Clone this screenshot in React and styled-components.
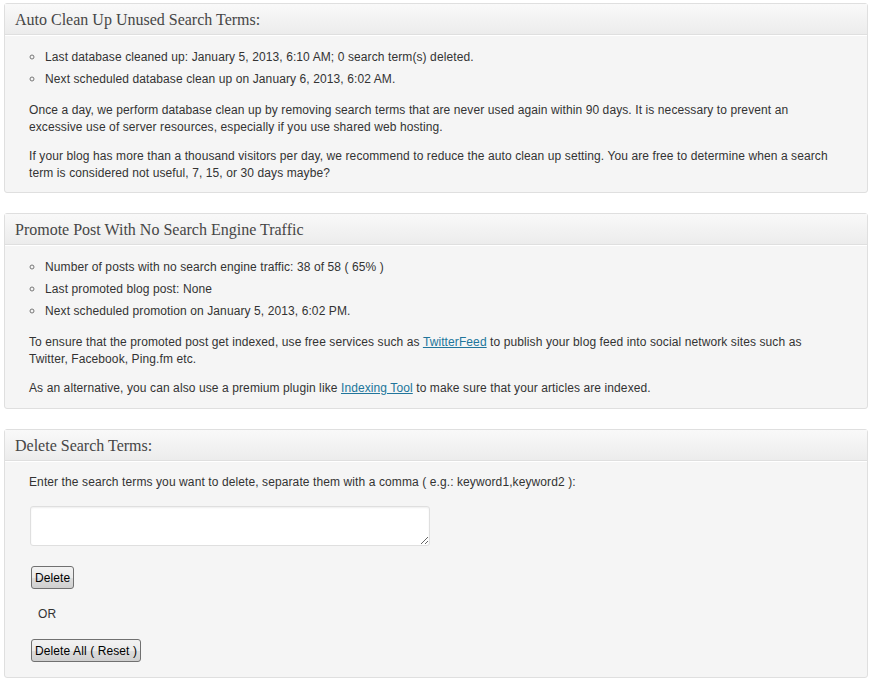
import React from 'react';
import styled, { createGlobalStyle } from 'styled-components';

const GlobalStyle = createGlobalStyle`
  html, body {
    margin: 0;
    padding: 0;
    background: #fff;
  }
  body {
    font-family: "Liberation Sans", Arial, sans-serif;
    font-size: 12px;
    letter-spacing: 0.1px;
    color: #333;
  }
`;

function App() {
  return (
    <Page>
      <GlobalStyle />
      <Postbox>
        <Handle>Auto Clean Up Unused Search Terms:</Handle>
        <Inside>
          <List>
            <li>Last database cleaned up: January 5, 2013, 6:10 AM; 0 search term(s) deleted.</li>
            <li>Next scheduled database clean up on January 6, 2013, 6:02 AM.</li>
          </List>
          <Para>
            Once a day, we perform database clean up by removing search terms that are never used again within 90 days. It is necessary to prevent an<br />
            excessive use of server resources, especially if you use shared web hosting.
          </Para>
          <Para>
            If your blog has more than a thousand visitors per day, we recommend to reduce the auto clean up setting. You are free to determine when a search<br />
            term is considered not useful, 7, 15, or 30 days maybe?
          </Para>
        </Inside>
      </Postbox>

      <Postbox>
        <Handle>Promote Post With No Search Engine Traffic</Handle>
        <Inside $bottom={11}>
          <List>
            <li>Number of posts with no search engine traffic: 38 of 58 ( 65% )</li>
            <li>Last promoted blog post: None</li>
            <li>Next scheduled promotion on January 5, 2013, 6:02 PM.</li>
          </List>
          <Para>
            To ensure that the promoted post get indexed, use free services such as <Link href="#">TwitterFeed</Link> to publish your blog feed into social network sites such as<br />
            Twitter, Facebook, Ping.fm etc.
          </Para>
          <Para>
            As an alternative, you can also use a premium plugin like <Link href="#">Indexing Tool</Link> to make sure that your articles are indexed.
          </Para>
        </Inside>
      </Postbox>

      <Postbox>
        <Handle>Delete Search Terms:</Handle>
        <Inside $top={13} $bottom={15}>
          <Para>Enter the search terms you want to delete, separate them with a comma ( e.g.: keyword1,keyword2 ):</Para>
          <TermsInput />
          <Button>Delete</Button>
          <OrText>OR</OrText>
          <Button>Delete All ( Reset )</Button>
        </Inside>
      </Postbox>
    </Page>
  );
}

const Page = styled.div`
  padding: 3px 3px 0 4px;
  display: flex;
  flex-direction: column;
  gap: 20px;
`;

const Postbox = styled.div`
  background: #f5f5f5;
  border: 1px solid #dfdfdf;
  border-radius: 3px;
  box-shadow: inset 0 1px 0 #fff;
`;

const Handle = styled.h3`
  margin: 0;
  height: 30px;
  line-height: 31px;
  padding: 0 10px;
  font-family: "Liberation Serif", Georgia, serif;
  font-size: 16px;
  font-weight: normal;
  letter-spacing: 0;
  color: #464646;
  background: linear-gradient(to bottom, #f9f9f9, #ececec);
  border-bottom: 1px solid #dfdfdf;
  box-shadow: 0 1px 0 #fff;
`;

const Inside = styled.div`
  padding: ${(p) => p.$top ?? 11}px 24px ${(p) => p.$bottom ?? 10}px;
`;

const List = styled.ul`
  margin: 0 0 12px;
  padding: 0 0 0 16px;
  list-style: circle;
  line-height: 21px;

  li::marker {
    color: #777;
    font-size: 14px;
  }
`;

const Para = styled.p`
  margin: 0 0 12px;
  line-height: 17px;

  &:last-child {
    margin-bottom: 0;
  }
`;

const Link = styled.a`
  color: #21759b;
  text-decoration: underline;
`;

const TermsInput = styled.textarea`
  display: block;
  box-sizing: border-box;
  width: 400px;
  height: 40px;
  margin: 15px 0 20px 1px;
  background: #fff;
  border: 1px solid #dfdfdf;
  border-radius: 3px;
  box-shadow: inset 0 1px 2px rgba(0, 0, 0, 0.07);
  font-family: inherit;
  resize: vertical;
`;

const Button = styled.button`
  display: block;
  height: 23px;
  margin-left: 2px;
  padding: 0 3px;
  font-family: "Liberation Sans", Arial, sans-serif;
  font-size: 12px;
  letter-spacing: 0.1px;
  color: #000;
  background: linear-gradient(to bottom, #f2f2f2, #ebebeb 50%, #dddddd 51%, #cfcfcf);
  border: 1px solid #707070;
  border-radius: 3px;
`;

const OrText = styled.div`
  margin: 15px 0 15px 9px;
  line-height: 20px;
`;

export default App;
